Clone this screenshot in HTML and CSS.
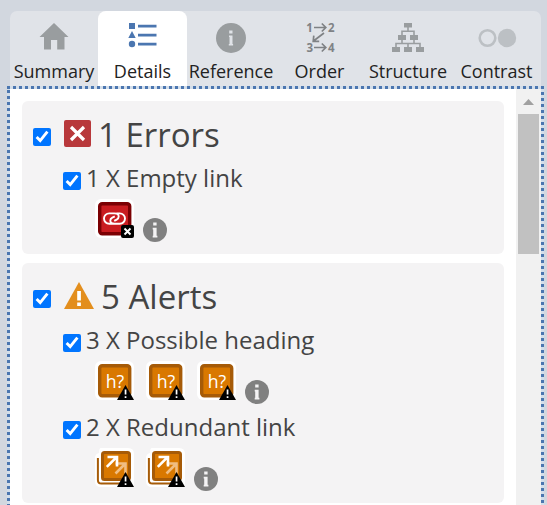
FILE: index.html
```html
<!DOCTYPE html>
<html lang="en">
<head>
<meta charset="utf-8">
<title>Details</title>
<link rel="stylesheet" href="styles.css">
</head>
<body>
<svg class="defs" aria-hidden="true">
  <defs>
    <symbol id="info" viewBox="0 0 24 24">
      <circle cx="12" cy="12" r="12" fill="#808080"/>
      <path d="M10.200 4.500h3.400v3h-3.400zM9.700 9.800h3.900v8h.8v1.700H9.700v-1.700h.5v-6.300h-.5z" fill="#f4f3f4"/>
    </symbol>
    <symbol id="warn" viewBox="0 0 17 15">
      <path d="M8.500 0L17 15H0z" fill="#000"/>
      <path d="M7.700 4.500h1.700v5H7.700zM7.700 11.200h1.700v1.700H7.700z" fill="#fff"/>
    </symbol>
    <symbol id="heading" viewBox="0 0 39 39">
      <rect width="39" height="39" rx="6" fill="#fff"/>
      <rect x="4.700" y="4.700" width="30" height="30" rx="2.500" fill="#d97800" stroke="#a65b08" stroke-width="3.400"/>
      <text x="10.700" y="26.500" class="tile-text" textLength="18.500" lengthAdjust="spacingAndGlyphs">h?</text>
      <use href="#warn" x="22" y="24" width="17" height="15"/>
    </symbol>
    <symbol id="redundant" viewBox="0 0 39 39">
      <path d="M6 0h27q6 0 6 6v33H6q-6 0-6-6V10q0-4 4-5Q4 0 6 0z" fill="#fff"/>
      <path d="M2.900 10v22q0 3.600 3.600 3.600H30" fill="none" stroke="#a65b08" stroke-width="2"/>
      <rect x="7.500" y="4.500" width="27" height="27" rx="2" fill="#d97800" stroke="#a65b08" stroke-width="3"/>
      <path d="M20.500 25.500l9-9M20.500 15.500h10v10" fill="none" stroke="#f0bd82" stroke-width="2.600"/>
      <path d="M11.800 18.800l9-9M12.500 9h9.500v9.500" fill="none" stroke="#fff" stroke-width="2.600"/>
      <use href="#warn" x="22" y="24" width="17" height="15"/>
    </symbol>
  </defs>
</svg>

<nav class="tabs">
  <div class="tab">
    <svg class="tab-icon" viewBox="0 0 32 32"><path d="M16 2L30.500 16H26.500v12.500h-7.300V19h-6.200v9.500H6V16H1.500z" fill="#999d9f"/></svg>
    <span>Summary</span>
  </div>
  <div class="tab active">
    <svg class="tab-icon" viewBox="0 0 32 32"><g fill="#4b76b0"><path d="M2 2h6v6H2zM5 10l3.700 7H1.300z"/><circle cx="5" cy="23" r="3.200"/><path d="M11 3.800h18.500v2.800H11zM11 12.800h18.500v2.800H11zM11 21.700h18.500v2.800H11z"/></g></svg>
    <span>Details</span>
  </div>
  <div class="tab">
    <svg class="tab-icon" viewBox="0 0 32 32"><circle cx="16" cy="17" r="15" fill="#999d9f"/><path d="M14.200 9.500h3.300v3h-3.300zM14 14.500h3.500v8.500h.6v1.500h-4.300v-1.500h.7v-7h-.5z" fill="#e0e3e8"/></svg>
    <span>Reference</span>
  </div>
  <div class="tab">
    <svg class="tab-icon" viewBox="0 0 32 32"><g class="order-text"><text x="2.300" y="11">1</text><text x="24" y="11">2</text><text x="2.500" y="31">3</text><text x="24" y="31">4</text></g><path d="M10 6.500h11.800M17.800 2.500l4 4-4 4M10 26.500h11.800M17.800 22.500l4 4-4 4M20 12L9.500 20M9.800 14.700L9.200 20.300h6" fill="none" stroke="#7f8285" stroke-width="1.700"/></svg>
    <span>Order</span>
  </div>
  <div class="tab">
    <svg class="tab-icon" viewBox="0 0 32 32"><g fill="#999d9f"><path d="M12 2h8v4.500h-8zM6 14h8v5H6zM18 14h8v5h-8zM0 26h8v5H0zM12 26h8v5h-8zM24 26h8v5h-8z"/></g><path d="M16 6v4M10 15V10.200h12V15M10 18v4.500M22 18v4.500M4 27v-4.500h24V27M16 22.500V27" fill="none" stroke="#999d9f" stroke-width="1.600"/></svg>
    <span>Structure</span>
  </div>
  <div class="tab">
    <svg class="tab-icon wide" viewBox="0 0 40 32"><circle cx="10.500" cy="17" r="7.800" fill="none" stroke="#bcc0c4" stroke-width="2.600"/><circle cx="30" cy="17" r="9.200" fill="#bcc0c4"/></svg>
    <span>Contrast</span>
  </div>
</nav>

<main class="panel">
  <div class="content">
    <section class="card">
      <h2 class="title">
        <input type="checkbox" checked>
        <svg class="error-icon" viewBox="0 0 27 27"><rect width="27" height="27" rx="2" fill="#b8383b"/><path d="M7 7l13 13M20 7L7 20" stroke="#fff" stroke-width="3.200"/></svg>
        <span>1 Errors</span>
      </h2>
      <div class="group">
        <label class="item"><input type="checkbox" checked><span>1 X Empty link</span></label>
        <div class="icons">
          <svg class="tile" viewBox="0 0 39 39">
            <rect width="39" height="39" rx="6" fill="#fff"/>
            <rect x="4.700" y="4.700" width="30" height="30" rx="2.500" fill="#c91c20" stroke="#7b0003" stroke-width="3.400"/>
            <path d="M17.500 24.800h-3.300a5.200 5.200 0 0 1 0-10.400h5.300q4.200 0 4.200 3.200 0 2-2 3l-2.500 1.200M21.500 14.400h3.300a5.200 5.200 0 0 1 0 10.400h-5.300q-4.200 0-4.200-3.200 0-2 2-3l2.500-1.200" fill="none" stroke="#fff" stroke-width="1.900"/>
            <rect x="26" y="26" width="13" height="13" rx="2" fill="#000"/>
            <path d="M29.500 29.500l6 6M35.500 29.500l-6 6" stroke="#fff" stroke-width="1.900"/>
          </svg>
          <svg class="info"><use href="#info"/></svg>
        </div>
      </div>
    </section>

    <section class="card">
      <h2 class="title">
        <input type="checkbox" checked>
        <svg class="alert-icon" viewBox="0 0 30 27"><path d="M15 0l15 27H0z" fill="#e38e1d"/><path d="M13.200 9h3.700v9.500h-3.700zM13.200 20.500h3.700v3.500h-3.700z" fill="#fff"/></svg>
        <span>5 Alerts</span>
      </h2>
      <div class="group">
        <label class="item"><input type="checkbox" checked><span>3 X Possible heading</span></label>
        <div class="icons">
          <svg class="tile"><use href="#heading"/></svg>
          <svg class="tile"><use href="#heading"/></svg>
          <svg class="tile"><use href="#heading"/></svg>
          <svg class="info"><use href="#info"/></svg>
        </div>
      </div>
      <div class="group">
        <label class="item"><input type="checkbox" checked><span>2 X Redundant link</span></label>
        <div class="icons">
          <svg class="tile"><use href="#redundant"/></svg>
          <svg class="tile"><use href="#redundant"/></svg>
          <svg class="info"><use href="#info"/></svg>
        </div>
      </div>
    </section>
  </div>
  <div class="scrollbar">
    <svg class="arrow" viewBox="0 0 11 6"><path d="M5.500 0L11 6H0z" fill="#a0a0a0"/></svg>
    <div class="thumb"></div>
  </div>
</main>
</body>
</html>
```
FILE: styles.css
```css
* { box-sizing: border-box; }
html, body { height: 100%; overflow: hidden; }
body {
  margin: 0;
  padding: 11px 3px 0 7px;
  background: #d2d7df;
  font-family: "Open Sans", "Noto Sans", sans-serif;
  color: #444;
}
svg { display: block; flex: none; overflow: visible; }
.defs { position: absolute; width: 0; height: 0; }

.tabs {
  display: grid;
  grid-template-columns: repeat(6, 88.5px);
  height: 75px;
  margin: 0 3px;
  border-radius: 7px 7px 0 0;
  background: #e0e3e8;
}
.tab {
  display: flex;
  flex-direction: column;
  align-items: center;
  margin-left: -0.5px;
  padding-top: 10px;
  font-size: 18px;
  line-height: 24px;
  color: #222;
  white-space: nowrap;
}
.tab span { margin-top: 6px; }
.tab.active { background: #fff; border-radius: 8px 8px 0 0; }
.tab-icon { width: 32px; height: 32px; }
.tab-icon.wide { width: 40px; }
.order-text { font-size: 11.500px; font-weight: 700; fill: #7f8285; }

/* Square dots of 3px drawn along the top, left and right edges */
.panel {
  --dot: #4b76b0;
  --gap: #d3deea;
  display: flex;
  height: 440px;
  padding: 3px 3px 0;
  background:
    repeating-linear-gradient(90deg, var(--dot) 0 3px, var(--gap) 3px 6px) 0 0 / 100% 3px no-repeat,
    repeating-linear-gradient(180deg, var(--gap) 0 1px, var(--dot) 1px 4px, var(--gap) 4px 6px) 0 3px / 3px 100% no-repeat,
    repeating-linear-gradient(180deg, var(--gap) 0 3px, var(--dot) 3px 6px) 100% 3px / 3px 100% no-repeat,
    #fff;
}
.content { flex: 1; padding: 12px 12px 0; }
.card {
  margin-bottom: 9px;
  padding: 0 0 6px 11px;
  border-radius: 6px;
  background: #f4f3f4;
}
input { flex: none; width: 18px; height: 18px; margin: 0; }
.title {
  display: flex;
  height: 60px;
  margin: 0;
  font-size: 33px;
  font-weight: 400;
  line-height: 54px;
  white-space: nowrap;
}
.title input { margin: 27px 13px 0 0; }
.title span { margin-top: 7px; }
.error-icon { width: 27px; height: 27px; margin: 19px 7px 0 0; }
.alert-icon { width: 30px; height: 27px; margin: 19px 7px 0 0; }
.group { height: 87px; padding-left: 30px; }
.item {
  display: flex;
  height: 36px;
  font-size: 24px;
  line-height: 33px;
  white-space: nowrap;
}
.item input { margin: 11px 5px 0 0; }
.icons { display: flex; padding: 2px 0 0 32px; }
.tile { width: 39px; height: 39px; }
.tile + .tile { margin-left: 12px; }
.tile-text { font-size: 18px; fill: #fff; }
.info { width: 24px; height: 24px; margin: 19px 0 0 9px; }

.scrollbar {
  width: 25px;
  padding: 10px 2px 0;
  background: #f1f1f1;
}
.arrow { width: 11px; height: 6px; margin: 0 auto 9px; }
.thumb { height: 140px; background: #c1c1c1; }
```
